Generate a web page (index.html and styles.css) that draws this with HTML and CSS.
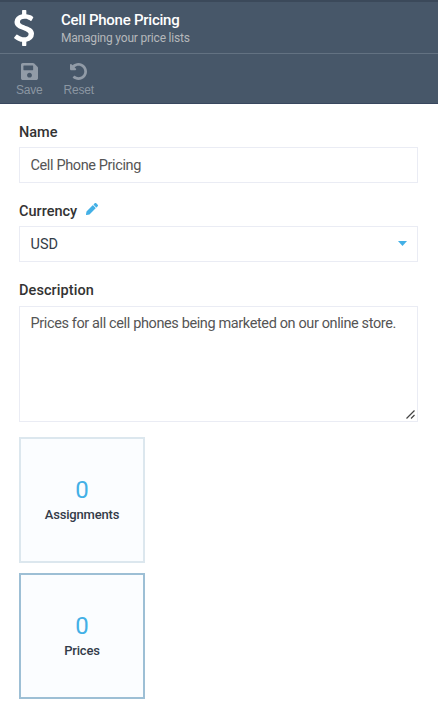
FILE: index.html
```html
<!DOCTYPE html>
<html lang="en">
<head>
<meta charset="utf-8">
<title>Cell Phone Pricing</title>
<link rel="stylesheet" href="styles.css">
</head>
<body>
<header class="head">
  <div class="title-row">
    <svg class="dollar" viewBox="44 0 934 1792" preserveAspectRatio="none"><path d="M978 1185q0 153-99.500 263.500T620 1585v175q0 14-9 23t-23 9H453q-13 0-22.500-9.500T421 1760v-175q-66-9-127.500-31T192 1509.500t-74-48-46.500-37.500-17.500-18q-17-21-2-41l103-135q7-10 23-12 15-2 24 9l2 2q113 99 243 125 37 8 74 8 81 0 142.500-43t61.500-122q0-28-15-53t-33.500-42-58.500-37.500-66-32-80-32.500q-39-16-61.500-25T349 948.500t-62.500-31T230 882t-53.500-42.500-43.500-49-35.500-58-21-66.500-8.500-78q0-138 98-242t255-134V32q0-13 9.500-22.500T453 0h135q14 0 23 9t9 23v176q57 6 110.500 23t87 33.500T881 302t39 29 15 14q17 18 5 38l-81 146q-8 15-23 16-14 3-27-7-3-3-14.500-12t-39-26.500-58.500-32-74.500-26T537 430q-95 0-155 43t-60 111q0 26 8.500 48t29.500 41.500 39.500 33 56 31 60.500 27 70 27.500q53 20 81 31.500t76 35 75.500 42.500 62 50 53 63.500 31.500 76.500 13 94z"/></svg>
    <div>
      <h1 class="title">Cell Phone Pricing</h1>
      <p class="subtitle">Managing your price lists</p>
    </div>
  </div>
  <div class="toolbar">
    <div class="tool">
      <svg class="tool-icon" viewBox="0 32 448 448"><path d="M433.941 129.941l-83.882-83.882A48 48 0 0 0 316.118 32H48C21.490 32 0 53.490 0 80v352c0 26.510 21.490 48 48 48h352c26.510 0 48-21.490 48-48V163.882a48 48 0 0 0-14.059-33.941zM224 416c-35.346 0-64-28.654-64-64 0-35.346 28.654-64 64-64s64 28.654 64 64c0 35.346-28.654 64-64 64zm96-304.520V212c0 6.627-5.373 12-12 12H76c-6.627 0-12-5.373-12-12V108c0-6.627 5.373-12 12-12h228.520c3.183 0 6.235 1.264 8.485 3.515l3.480 3.480A11.996 11.996 0 0 1 320 111.480z"/></svg>
      <span>Save</span>
    </div>
    <div class="tool">
      <svg class="tool-icon" viewBox="8 8 496 496"><path d="M255.545 8c-66.269.119-126.438 26.233-170.860 68.685L48.971 40.971C33.851 25.851 8 36.559 8 57.941V192c0 13.255 10.745 24 24 24h134.059c21.382 0 32.090-25.851 16.971-40.971l-41.750-41.750c30.864-28.899 70.801-44.907 113.230-45.273 92.398-.798 170.283 73.977 169.484 169.442C423.236 348.009 349.816 424 256 424c-41.127 0-79.997-14.678-110.630-41.556-4.743-4.161-11.906-3.908-16.368.553L89.340 422.659c-4.872 4.872-4.631 12.815.482 17.433C133.798 479.813 192.074 504 256 504c136.966 0 247.999-111.033 248-247.998C504.001 119.193 392.354 7.755 255.545 8z"/></svg>
      <span>Reset</span>
    </div>
  </div>
</header>
<main class="form">
  <div class="label">Name</div>
  <div class="field name">Cell Phone Pricing</div>
  <div class="label">Currency
    <svg class="pencil" viewBox="0 0 512 512"><path d="M497.900 142.100l-46.100 46.100c-4.700 4.700-12.300 4.700-17 0l-111-111c-4.700-4.700-4.700-12.300 0-17l46.100-46.100c18.700-18.700 49.100-18.700 67.900 0l60.100 60.100c18.800 18.700 18.800 49.100 0 67.900zM284.200 99.800L21.600 362.400.4 483.900c-2.900 16.400 11.400 30.600 27.800 27.800l121.500-21.300 262.600-262.600c4.700-4.700 4.700-12.300 0-17l-111-111c-4.800-4.700-12.400-4.700-17.100 0z"/></svg>
  </div>
  <div class="field select"><span>USD</span><svg class="caret" viewBox="0 0 9 5"><path d="M0 0h9L4.500 5z"/></svg></div>
  <div class="label desc">Description</div>
  <div class="field area"><span>Prices for all cell phones being marketed on our online store.</span>
    <svg class="grip" viewBox="0 0 9 9"><path d="M.5 8.500l8-8M5 8.500l3.500-3.500"/></svg>
  </div>
  <div class="tile"><span class="count">0</span><span class="caption">Assignments</span></div>
  <div class="tile active"><span class="count">0</span><span class="caption">Prices</span></div>
</main>
</body>
</html>
```
FILE: styles.css
```css
* { box-sizing: border-box; }
body { margin: 0; background: #fff; font-family: Roboto, sans-serif; }
svg { display: block; flex: none; }
.head {
  height: 104px;
  background: #475769;
  border-top: 2px solid #3b495a;
  border-bottom: 1px solid #38475e;
}
.title-row {
  height: 52px;
  display: flex;
  padding: 8px 0 0 14px;
  gap: 27px;
  border-bottom: 1px solid #637282;
}
.dollar { width: 20px; height: 36px; fill: #fff; }
.title { margin: 0; font-size: 15px; line-height: 20px; font-weight: 500; color: #fff; letter-spacing: -0.25px; }
.subtitle { margin: 0; font-size: 12px; line-height: 16px; color: #b5b8bb; letter-spacing: -0.2px; }
.toolbar { display: flex; gap: 21px; padding: 9px 0 0 16px; }
.tool {
  display: flex;
  flex-direction: column;
  align-items: center;
  gap: 3px;
  font: 12px/15px "Liberation Sans", sans-serif;
  letter-spacing: -0.2px;
  color: #8b96a2;
}
.tool-icon { width: 17px; height: 17px; fill: #919ba7; }
.form { padding: 17px 20px 0 19px; }
.label {
  display: flex;
  gap: 9px;
  height: 20px;
  font-size: 14.5px;
  line-height: 23px;
  font-weight: 500;
  color: #333;
}
.desc { line-height: 21px; letter-spacing: 0.08px; }
.pencil { width: 12px; height: 12px; margin-top: 3px; fill: #43b0e6; }
.field {
  height: 36px;
  margin: 6px 0 18px;
  padding: 0 10.5px;
  border: 1px solid #eaecf4;
  font-size: 14.5px;
  line-height: 35px;
  letter-spacing: -0.38px;
  color: #555;
}
.name { margin-bottom: 17px; }
.select { display: flex; justify-content: space-between; align-items: center; color: #333c48; letter-spacing: 0; }
.caret { width: 9px; height: 5px; margin-top: -1px; fill: #43b0e6; }
.area { position: relative; height: 116px; margin-bottom: 15px; white-space: nowrap; line-height: 34px; }
.grip { position: absolute; right: 2px; bottom: 2px; width: 9px; height: 9px; fill: none; stroke: #444; stroke-width: 1.2; }
.tile {
  width: 126px;
  height: 126px;
  margin-bottom: 10px;
  padding-top: 36px;
  display: flex;
  flex-direction: column;
  align-items: center;
  border: 2px solid #dce7ee;
  background: #fbfdff;
}
.active { border-color: #9dbfd5; }
.count { font-size: 24px; line-height: 30px; color: #43b0e6; }
.caption { margin-top: 1px; font-size: 13px; line-height: 18px; font-weight: 500; color: #333b49; letter-spacing: -0.2px; }
```
